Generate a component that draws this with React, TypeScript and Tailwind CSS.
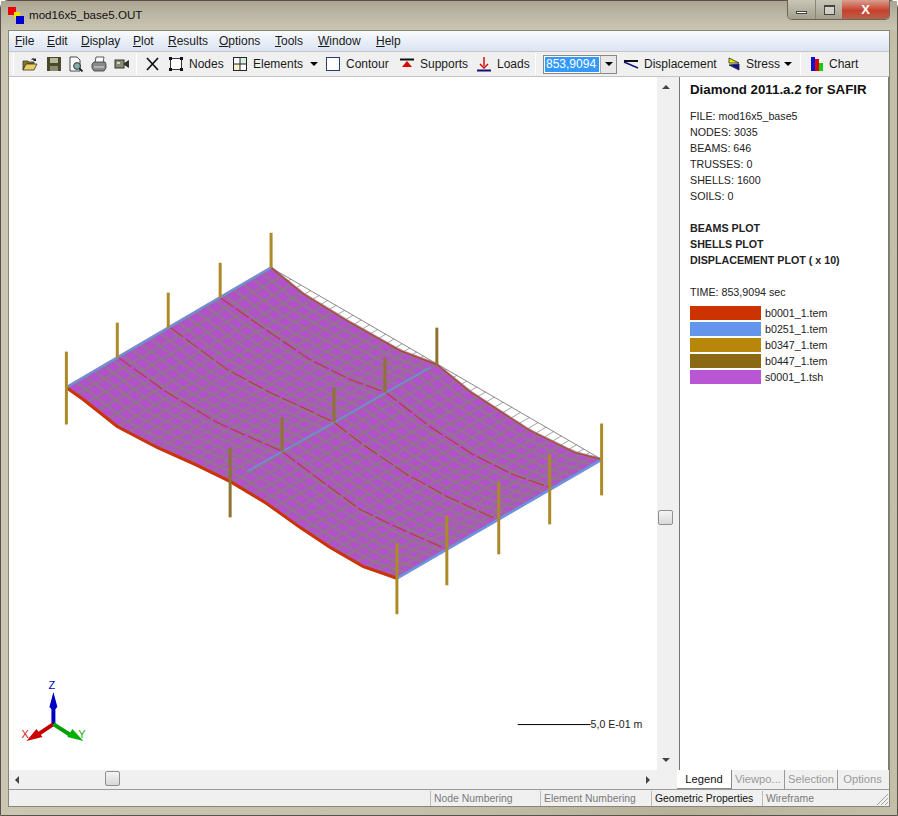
import type { ReactNode } from "react";

type Pt = [number, number];

const frontEdge: Pt[] = [[66, 388], [83, 400], [117, 427], [157, 448], [195, 465], [230, 482], [265, 503], [300, 528], [330, 548], [363, 567], [397, 579]];
const backEdge: Pt[] = [[271, 268], [303, 294], [347, 321], [400, 351], [437, 365], [470, 392], [530, 431], [575, 453], [602, 460]];
const beamA: Pt[] = [[220, 298], [270, 333], [310, 360], [350, 380], [386, 393], [430, 427], [473, 455], [513, 475], [550, 488]];
const beamB: Pt[] = [[170, 328], [227, 370], [270, 393], [307, 410], [334, 423], [363, 445], [407, 475], [447, 497], [497, 520]];
const beamC: Pt[] = [[118, 358], [167, 393], [217, 423], [282, 452], [330, 488], [360, 510], [395, 527], [447, 550]];

// columns: x, top, bottom
const columns: [number, number, number][] = [
  [271, 233, 268], [220, 263, 298], [168, 293, 328], [117, 323, 358], [437, 328, 365],
  [385, 358, 393], [334, 388, 423], [282, 418, 452], [230, 448, 518], [66, 352, 425],
  [602, 424, 496], [550, 455, 525], [499, 483, 555], [447, 516, 586], [397, 544, 615],
];

const lerp = (a: Pt, b: Pt, t: number): Pt => [a[0] + (b[0] - a[0]) * t, a[1] + (b[1] - a[1]) * t];

// point on a polyline for u between 0 and 1, measured on x
const along = (line: Pt[], u: number): Pt => {
  const x = line[0][0] + (line[line.length - 1][0] - line[0][0]) * u;
  for (let i = 1; i < line.length; i++) {
    if (x <= line[i][0]) {
      return lerp(line[i - 1], line[i], (x - line[i - 1][0]) / (line[i][0] - line[i - 1][0]));
    }
  }
  return line[line.length - 1];
};

const pts = (line: Pt[]) => line.map((p) => p.join(",")).join(" ");
const steps = (n: number) => Array.from({ length: n + 1 }, (_, i) => i / n);

const Plot = () => {
  const plate = [...frontEdge, ...[...backEdge].reverse()];
  return (
    <svg viewBox="9 77 648 694" className="block w-full h-full">
      {/* undeformed hatch behind the plate */}
      {steps(40).map((u) => {
        const a = along(backEdge, u);
        const gap = Math.max(0, a[1] - (268 + (a[0] - 271) * 0.58));
        return <line key={u} x1={a[0]} y1={a[1]} x2={a[0] + 0.86 * gap} y2={a[1] - 0.5 * gap} stroke="#666" strokeWidth="0.6" />;
      })}
      <line x1={271} y1={268} x2={602} y2={460} stroke="#555" strokeWidth="0.7" />

      <polygon points={pts(plate)} fill="#b350cc" />
      {steps(32).map((u) => {
        const a = along(frontEdge, u);
        const b = along(backEdge, u);
        return <line key={u} x1={a[0]} y1={a[1]} x2={b[0]} y2={b[1]} stroke="#947490" strokeWidth="3" opacity="0.8" />;
      })}
      {steps(22).map((v) => (
        <polyline
          key={v}
          points={pts(steps(40).map((u) => lerp(along(frontEdge, u), along(backEdge, u), v)))}
          fill="none"
          stroke="#947490"
          strokeWidth="3"
          opacity="0.8"
        />
      ))}

      {/* beams */}
      <polyline points={pts(frontEdge)} fill="none" stroke="#cc3300" strokeWidth="3" />
      <polyline points={pts(backEdge)} fill="none" stroke="#b4402a" strokeWidth="1.2" />
      <polyline points={pts(beamA)} fill="none" stroke="#b63c2a" strokeWidth="1.1" strokeDasharray="16 3" />
      <polyline points={pts(beamB)} fill="none" stroke="#b63c2a" strokeWidth="1.1" strokeDasharray="16 3" />
      <polyline points={pts(beamC)} fill="none" stroke="#b63c2a" strokeWidth="1.1" strokeDasharray="16 3" />
      <line x1={66} y1={388} x2={271} y2={268} stroke="#6d8fd8" strokeWidth="2.2" />
      <line x1={397} y1={579} x2={602} y2={460} stroke="#6495ed" strokeWidth="2.2" />
      <polyline points="247,472 282,452 334,423 386,393 430,368" fill="none" stroke="#6d8fd8" strokeWidth="1.8" />

      {/* columns */}
      {columns.map(([x, y1, y2], i) => (
        <line key={x} x1={x} y1={y1} x2={x} y2={y2} stroke={i < 9 && i > 3 ? "#8e7430" : "#ad8a28"} strokeWidth="3" />
      ))}

      {/* axes */}
      <line x1="53" y1="725" x2="53" y2="704" stroke="#0000c0" strokeWidth="4" />
      <polygon points="53,693 57,708 53,712 49,708" fill="#0000c0" />
      <line x1="53" y1="725" x2="38" y2="735" stroke="#c00000" strokeWidth="4" />
      <polygon points="26,742 36,730 42,738" fill="#d00000" />
      <line x1="53" y1="725" x2="70" y2="736" stroke="#00a000" strokeWidth="4" />
      <polygon points="83,742 67,738 72,730" fill="#00b000" />
      <text x="48" y="690" fontSize="11" fill="#0000c0" fontFamily="Liberation Sans">Z</text>
      <text x="21" y="739" fontSize="11" fill="#d02020" fontFamily="Liberation Sans">X</text>
      <text x="78" y="739" fontSize="11" fill="#20b020" fontFamily="Liberation Sans">Y</text>

      {/* scale */}
      <line x1="518" y1="725.5" x2="591" y2="725.5" stroke="#000" />
      <text x="591" y="729" fontSize="10.6" fill="#222" fontFamily="Liberation Sans">5,0 E-01 m</text>
    </svg>
  );
};

const Icon = ({ children, w = 16 }: { children: ReactNode; w?: number }) => (
  <svg width={w} height="16" viewBox={`0 0 ${w} 16`} className="shrink-0">
    {children}
  </svg>
);

const OpenIcon = () => (
  <Icon>
    <path d="M1 5h5l1 1h5v2H4L1 14z" fill="#8a7a20" stroke="#333" strokeWidth="0.8" />
    <path d="M1 14l3-6h11l-3 6z" fill="#e8d060" stroke="#333" strokeWidth="0.8" />
    <path d="M9 4c1-2 3-2 4-1l1-1v3h-3l1-1c-1-.5-2-.5-3 0z" fill="#222" />
  </Icon>
);
const SaveIcon = () => (
  <Icon>
    <rect x="1" y="1" width="14" height="14" fill="#4a4a28" />
    <rect x="4" y="2" width="8" height="5" fill="#b8b8a0" />
    <rect x="4" y="10" width="8" height="5" fill="#8a8a70" />
  </Icon>
);
const PreviewIcon = () => (
  <Icon>
    <path d="M2 1h7l3 3v11H2z" fill="#fff" stroke="#333" strokeWidth="0.9" />
    <circle cx="9" cy="10" r="3.4" fill="#7fb0a8" stroke="#333" />
    <path d="M11.5 12.5l3 3" stroke="#222" strokeWidth="1.8" />
  </Icon>
);
const PrintIcon = () => (
  <Icon>
    <path d="M5 1h8l-1 6H4z" fill="#fff" stroke="#333" strokeWidth="0.8" />
    <path d="M1 8l2-2h11l1 2v4l-2 3H3l-2-3z" fill="#8a8a8a" stroke="#333" strokeWidth="0.8" />
    <path d="M3 11h10" stroke="#ddd" />
  </Icon>
);
const CameraIcon = () => (
  <Icon>
    <rect x="1" y="4" width="9" height="8" fill="#8a8a70" stroke="#333" />
    <path d="M10 7l5-3v8l-5-3z" fill="#333" />
    <rect x="3" y="6" width="3" height="2" fill="#d8d8c0" />
  </Icon>
);
const CrossIcon = () => (
  <Icon>
    <path d="M2 2l11 12M13 2L2 14" stroke="#111" strokeWidth="1.7" />
  </Icon>
);
const NodesIcon = () => (
  <Icon>
    <rect x="2.5" y="2.5" width="11" height="11" fill="#fff" stroke="#334" />
    <path d="M1 1h3v3H1zM12 1h3v3h-3zM1 12h3v3H1zM12 12h3v3h-3z" fill="#111" />
  </Icon>
);
const ElementsIcon = () => (
  <Icon>
    <rect x="1.5" y="1.5" width="13" height="13" fill="#fff" stroke="#223" />
    <rect x="2" y="8" width="6" height="6" fill="#f4f0c8" />
    <rect x="8" y="2" width="6" height="6" fill="#d8f0d8" />
    <path d="M8 1v14M1 8h14" stroke="#223" />
  </Icon>
);
const ContourIcon = () => (
  <Icon>
    <rect x="1.5" y="1.5" width="13" height="13" fill="#fff" stroke="#223a70" />
  </Icon>
);
const SupportsIcon = () => (
  <Icon>
    <path d="M1 3.5h14" stroke="#111" strokeWidth="2" />
    <path d="M8 5l5 6H3z" fill="#e00000" />
  </Icon>
);
const LoadsIcon = () => (
  <Icon>
    <path d="M8 1v9" stroke="#d00000" strokeWidth="1.4" />
    <path d="M4 8l4 4 4-4" fill="none" stroke="#d00000" strokeWidth="1.4" />
    <path d="M1 14.5h14" stroke="#101070" strokeWidth="2" />
  </Icon>
);
const DisplacementIcon = () => (
  <Icon>
    <path d="M1 5h14" stroke="#111" strokeWidth="2" />
    <path d="M1 6l14 6" stroke="#101080" strokeWidth="1.4" />
  </Icon>
);
const StressIcon = () => (
  <Icon w={14}>
    <path d="M2 2l10 5H2z" fill="#f0f000" stroke="#222" strokeWidth="0.8" />
    <path d="M12 8v6L2 9z" fill="#1010a0" stroke="#222" strokeWidth="0.8" />
  </Icon>
);
const ChartIcon = () => (
  <Icon w={14}>
    <rect x="1" y="1" width="4" height="14" fill="#1010d0" />
    <rect x="5" y="3" width="4" height="12" fill="#e00000" />
    <rect x="9" y="7" width="4" height="8" fill="#10d010" />
  </Icon>
);

const Caret = () => <div className="w-0 h-0 border-x-[4px] border-x-transparent border-t-[4px] border-t-black" />;

const Tool = ({ icon, label, w }: { icon: ReactNode; label?: string; w: string }) => (
  <div className={`flex items-center gap-[5px] shrink-0 ${w}`}>
    {icon}
    {label && <span className="whitespace-nowrap">{label}</span>}
  </div>
);

const Sep = () => <div className="w-px h-[22px] bg-[#c8c8c8] border-r border-white shrink-0" />;

const menus: { name: string; w: string }[] = [
  { name: "File", w: "w-[32px]" },
  { name: "Edit", w: "w-[34px]" },
  { name: "Display", w: "w-[52px]" },
  { name: "Plot", w: "w-[35px]" },
  { name: "Results", w: "w-[51px]" },
  { name: "Options", w: "w-[56px]" },
  { name: "Tools", w: "w-[43px]" },
  { name: "Window", w: "w-[58px]" },
  { name: "Help", w: "w-[32px]" },
];

const info = ["FILE: mod16x5_base5", "NODES: 3035", "BEAMS: 646", "TRUSSES: 0", "SHELLS: 1600", "SOILS: 0"];
const plots = ["BEAMS PLOT", "SHELLS PLOT", "DISPLACEMENT PLOT ( x 10)"];
const legend: { name: string; swatch: string }[] = [
  { name: "b0001_1.tem", swatch: "bg-[#cc3300]" },
  { name: "b0251_1.tem", swatch: "bg-[#6495ed]" },
  { name: "b0347_1.tem", swatch: "bg-[#b8860b]" },
  { name: "b0447_1.tem", swatch: "bg-[#8b6914]" },
  { name: "s0001_1.tsh", swatch: "bg-[#ba55d3]" },
];

const ArrowUp = () => <div className="w-0 h-0 border-x-[4px] border-x-transparent border-b-[4px] border-b-[#444]" />;
const ArrowDown = () => <div className="w-0 h-0 border-x-[4px] border-x-transparent border-t-[4px] border-t-[#444]" />;
const ArrowLeft = () => <div className="w-0 h-0 border-y-[4px] border-y-transparent border-r-[4px] border-r-[#444]" />;
const ArrowRight = () => <div className="w-0 h-0 border-y-[4px] border-y-transparent border-l-[4px] border-l-[#444]" />;

const App = () => {
  return (
    <div className="w-[898px] h-[816px] overflow-hidden bg-white font-['Liberation_Sans',sans-serif]">
      <div className="relative w-full h-full flex flex-col rounded-t-[8px] border border-[#57534a] bg-[linear-gradient(90deg,#cbc6b2,#c6c1ac_45%,#b7b19a_75%,#c4bfa9)]">
        {/* title bar */}
        <div className="h-[29px] shrink-0 flex items-center justify-between pl-[7px] pr-[7px] bg-[linear-gradient(180deg,#a9a38f,#bab5a2_40%,#c9c5b3)]">
          <div className="flex items-center gap-[4px]">
            <svg width="17" height="17" viewBox="0 0 17 17">
              <rect x="0" y="0" width="8" height="8" fill="#f00000" />
              <rect x="6" y="5" width="6" height="6" fill="#f0e000" />
              <rect x="8" y="9" width="8" height="8" fill="#0000d0" />
            </svg>
            <span className="text-[11.6px] text-[#111] -mt-px">mod16x5_base5.OUT</span>
          </div>
          <div className="flex self-start h-[20px] rounded-b-[5px] overflow-hidden border border-t-0 border-[#6a6656] -mt-px">
            <div className="w-[28px] flex items-end justify-center pb-[5px] bg-[linear-gradient(180deg,#c9c6b8,#a39f8c)] border-r border-[#8a8674]">
              <div className="w-[11px] h-[3px] bg-white border border-[#444]" />
            </div>
            <div className="w-[26px] flex items-center justify-center bg-[linear-gradient(180deg,#c9c6b8,#a39f8c)]">
              <div className="w-[11px] h-[10px] bg-white/40 border border-[#444] border-t-2" />
            </div>
            <div className="w-[47px] flex items-center justify-center text-white font-bold text-[13px] bg-[linear-gradient(180deg,#d8a090,#c8402c_55%,#b8604c)]">
              X
            </div>
          </div>
        </div>

        {/* window body */}
        <div className="flex-1 min-h-0 mx-[7px] mb-[8px] flex flex-col border border-[#8a8674] text-[12px] text-[#1a1a1a]">
          {/* menu */}
          <div className="h-[20px] shrink-0 flex items-center pl-[6px] bg-[linear-gradient(180deg,#f8fafd,#dbe4f2)]">
            {menus.map((m) => (
              <span key={m.name} className={`whitespace-nowrap shrink-0 ${m.w}`}>
                <span className="underline">{m.name[0]}</span>
                {m.name.slice(1)}
              </span>
            ))}
          </div>

          {/* toolbar */}
          <div className="h-[26px] shrink-0 flex items-center pl-[4px] bg-[#f0f0f0] border-y border-[#c4c4c4]">
            <Sep />
            <div className="w-[8px] shrink-0" />
            <Tool w="w-[24px]" icon={<OpenIcon />} />
            <Tool w="w-[22px]" icon={<SaveIcon />} />
            <Tool w="w-[23px]" icon={<PreviewIcon />} />
            <Tool w="w-[23px]" icon={<PrintIcon />} />
            <Tool w="w-[22px]" icon={<CameraIcon />} />
            <Sep />
            <div className="w-[8px] shrink-0" />
            <Tool w="w-[23px]" icon={<CrossIcon />} />
            <Tool w="w-[64px]" icon={<NodesIcon />} label="Nodes" />
            <Tool w="w-[76px]" icon={<ElementsIcon />} label="Elements" />
            <div className="w-[17px] shrink-0 pl-[2px]"><Caret /></div>
            <Tool w="w-[74px]" icon={<ContourIcon />} label="Contour" />
            <Tool w="w-[77px]" icon={<SupportsIcon />} label="Supports" />
            <Tool w="w-[59px]" icon={<LoadsIcon />} label="Loads" />
            <Sep />
            <div className="w-[7px] shrink-0" />
            <div className="w-[74px] h-[19px] shrink-0 flex items-center justify-between border border-[#888] bg-white">
              <span className="ml-px h-[15px] w-[54px] bg-[#3399ff] text-white leading-[15px] pl-px">853,9094</span>
              <div className="w-[16px] h-[17px] flex items-center justify-center bg-[#e8e8e8] border-l border-[#aaa]">
                <Caret />
              </div>
            </div>
            <div className="w-[6px] shrink-0" />
            <Tool w="w-[104px]" icon={<DisplacementIcon />} label="Displacement" />
            <Tool w="w-[57px]" icon={<StressIcon />} label="Stress" />
            <div className="w-[16px] shrink-0"><Caret /></div>
            <Sep />
            <div className="w-[9px] shrink-0" />
            <Tool w="w-[60px]" icon={<ChartIcon />} label="Chart" />
          </div>

          {/* main */}
          <div className="flex-1 min-h-0 flex bg-[#f0f0f0]">
            {/* plot with scrollbars */}
            <div className="w-[667px] shrink-0 flex flex-col">
              <div className="flex-1 min-h-0 flex">
                <div className="w-[648px] shrink-0 bg-white">
                  <Plot />
                </div>
                <div className="w-[19px] shrink-0 relative flex flex-col items-center justify-between py-[8px] pr-[2px]">
                  <ArrowUp />
                  <div className="absolute left-[1px] top-[433px] w-[15px] h-[15px] rounded-[2px] border border-[#8f8f8f] bg-[linear-gradient(180deg,#f4f4f4,#d8d8d8)]" />
                  <ArrowDown />
                </div>
              </div>
              <div className="h-[19px] shrink-0 relative flex items-center justify-between pl-[6px] pr-[26px] bg-[#f0f0f0]">
                <ArrowLeft />
                <div className="absolute left-[96px] top-[1px] w-[15px] h-[15px] rounded-[2px] border border-[#8f8f8f] bg-[linear-gradient(180deg,#f4f4f4,#d8d8d8)]" />
                <ArrowRight />
              </div>
            </div>

            {/* legend panel */}
            <div className="flex-1 min-w-0 pl-[3px] flex flex-col">
              <div className="flex-1 min-h-0 bg-white border-x border-[#777] pl-[10px] pt-[4px] text-[10.7px] leading-[16px] text-[#222]">
                <div className="text-[13.3px] font-bold text-[#111] leading-[18px] mb-[9px]">Diamond 2011.a.2 for SAFIR</div>
                {info.map((t) => (
                  <div key={t}>{t}</div>
                ))}
                <div className="h-[16px]" />
                {plots.map((t) => (
                  <div key={t} className="font-bold">{t}</div>
                ))}
                <div className="h-[16px]" />
                <div>TIME: 853,9094 sec</div>
                <div className="mt-[5px] flex flex-col">
                  {legend.map((l) => (
                    <div key={l.name} className="flex items-center h-[16px] gap-[4px]">
                      <div className={`w-[71px] h-[14px] ${l.swatch}`} />
                      <span>{l.name}</span>
                    </div>
                  ))}
                </div>
              </div>
              <div className="h-[19px] shrink-0 flex -ml-[2px] text-[11.2px] text-[#9a9a9a]">
                <div className="w-[55px] text-center bg-white text-[#111] border-r border-b border-[#888] leading-[18px]">Legend</div>
                <div className="w-[53px] text-center border-r border-[#999] leading-[18px]">Viewpo...</div>
                <div className="w-[53px] text-center border-r border-[#999] leading-[18px]">Selection</div>
                <div className="w-[49px] text-center leading-[18px]">Options</div>
              </div>
            </div>
          </div>

          {/* status bar */}
          <div className="h-[17px] shrink-0 flex items-end pl-[421px] bg-[#f0f0f0] border-t border-[#9a9a9a] text-[10.4px] text-[#7a7a7a]">
            <div className="w-[110px] h-[15px] pl-[3px] border-l border-[#bbb] leading-[15px] whitespace-nowrap">Node Numbering</div>
            <div className="w-[111px] h-[15px] pl-[3px] border-l border-[#bbb] leading-[15px] whitespace-nowrap">Element Numbering</div>
            <div className="w-[111px] h-[15px] pl-[3px] border-l border-[#bbb] leading-[15px] whitespace-nowrap text-[#111]">Geometric Properties</div>
            <div className="w-[108px] h-[15px] pl-[3px] border-l border-[#bbb] leading-[15px] whitespace-nowrap">Wireframe</div>
            <svg width="15" height="15" viewBox="0 0 15 15" className="ml-auto">
              <path d="M14 3L3 14M14 7l-7 7M14 11l-3 3" stroke="#a0a0a0" />
            </svg>
          </div>
        </div>
      </div>
    </div>
  );
};

export default App;
